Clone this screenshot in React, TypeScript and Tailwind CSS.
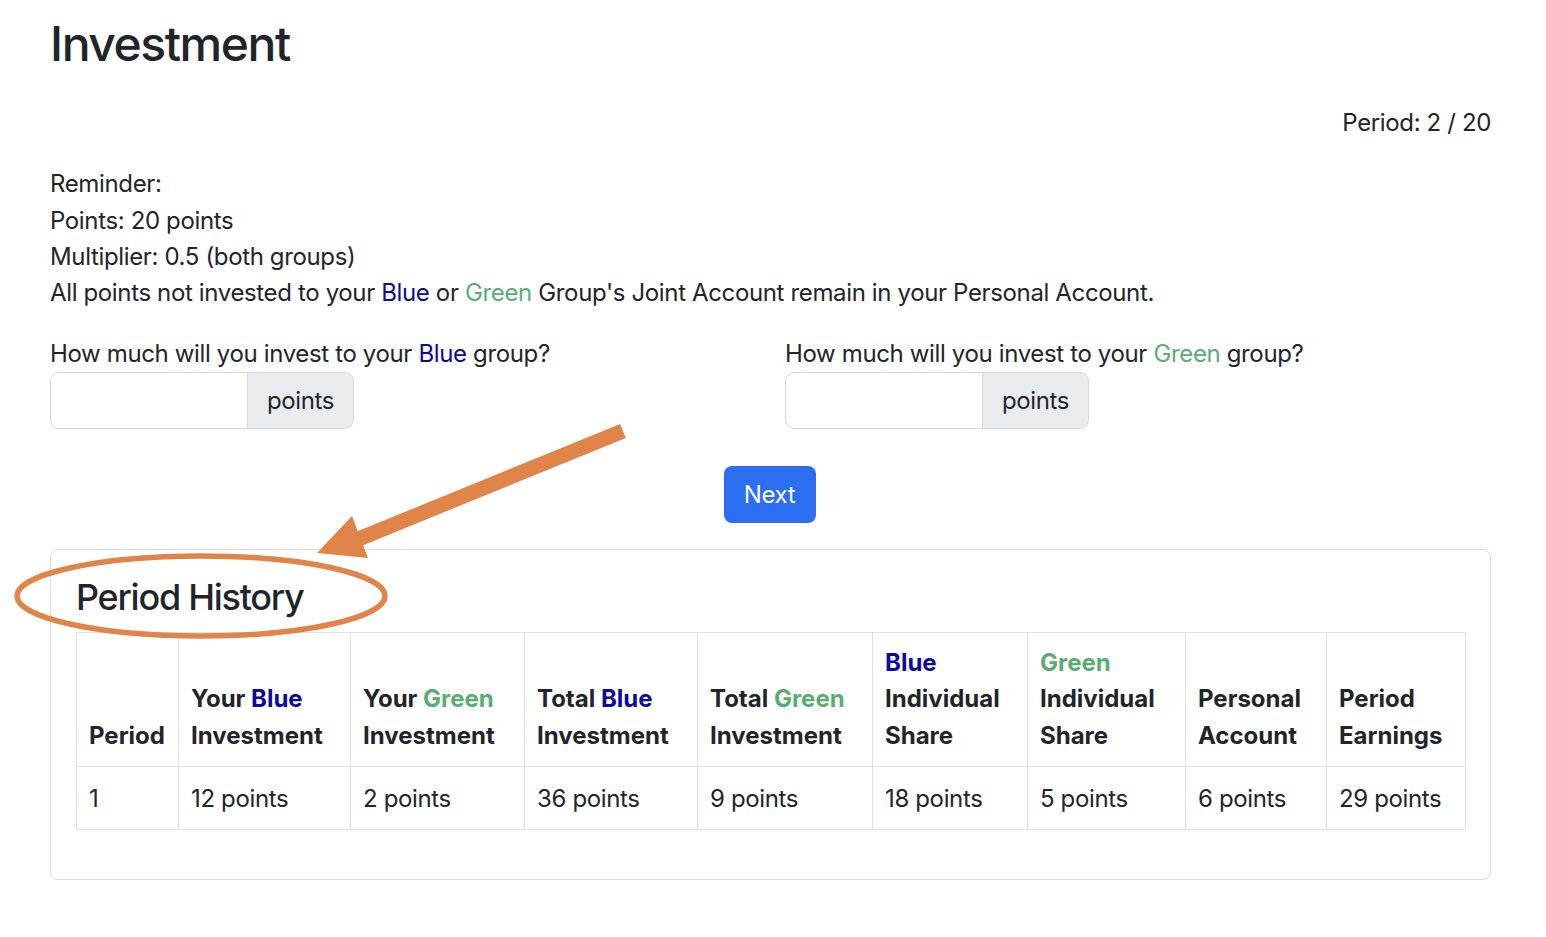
import React from "react";

const Blue = ({ children }: { children: React.ReactNode }) => (
  <span className="text-[#0a0a9c]">{children}</span>
);
const Green = ({ children }: { children: React.ReactNode }) => (
  <span className="text-[#5aad72]">{children}</span>
);

function InvestInput({ label }: { label: React.ReactNode }) {
  return (
    <div>
      <div>{label}</div>
      <div className="flex w-[304px]">
        <input
          type="text"
          className="h-[57px] w-[198px] rounded-l-[9px] border border-[#d6d9dc] bg-white px-[18px] outline-none"
        />
        <span className="flex h-[57px] w-[106px] items-center justify-center rounded-r-[9px] border border-l-0 border-[#d6d9dc] bg-[#e9ecef]">
          points
        </span>
      </div>
    </div>
  );
}

const headers: React.ReactNode[] = [
  "Period",
  <>
    Your <Blue>Blue</Blue> Investment
  </>,
  <>
    Your <Green>Green</Green> Investment
  </>,
  <>
    Total <Blue>Blue</Blue> Investment
  </>,
  <>
    Total <Green>Green</Green> Investment
  </>,
  <>
    <Blue>Blue</Blue> Individual Share
  </>,
  <>
    <Green>Green</Green> Individual Share
  </>,
  "Personal Account",
  "Period Earnings",
];

const widths = [102, 172, 174, 173, 175, 155, 158, 141, 139];

const row = [
  "1",
  "12 points",
  "2 points",
  "36 points",
  "9 points",
  "18 points",
  "5 points",
  "6 points",
  "29 points",
];

export default function App() {
  return (
    <div
      className="relative min-h-[937px] bg-white text-[24px] leading-[1.52] tracking-[-0.015em] text-[#212529]"
      style={{ fontFamily: "Inter, 'Noto Sans', sans-serif" }}
    >
      <div className="ml-[50px] w-[1441px] pt-[15px]">
        {/* Title */}
        <h2 className="text-[48px] font-medium leading-[1.2] tracking-[-0.03em]">
          Investment
        </h2>

        <div className="mt-[32px] text-right">Period: 2 / 20</div>

        {/* Reminder */}
        <div className="mt-[25px]">
          <div>Reminder:</div>
          <div>Points: 20 points</div>
          <div>Multiplier: 0.5 (both groups)</div>
          <div>
            All points not invested to your <Blue>Blue</Blue> or{" "}
            <Green>Green</Green> Group's Joint Account remain in your Personal
            Account.
          </div>
        </div>

        {/* Inputs */}
        <div className="mt-[24px] grid grid-cols-[735px_1fr]">
          <InvestInput
            label={
              <>
                How much will you invest to your <Blue>Blue</Blue> group?
              </>
            }
          />
          <InvestInput
            label={
              <>
                How much will you invest to your <Green>Green</Green> group?
              </>
            }
          />
        </div>

        <div className="mt-[37px] flex justify-center pr-[2px]">
          <button className="h-[57px] w-[92px] rounded-[8px] bg-[#2b6ef2] text-white">
            Next
          </button>
        </div>

        {/* Period History card */}
        <div className="mt-[26px] rounded-[8px] border border-[#dcdcdc] px-[25px] pt-[26px] pb-[25px]">
          <h4 className="text-[36px] font-medium leading-[1.2] tracking-[-0.035em]">
            Period History
          </h4>
          <table className="mt-[12px] mb-[24px] w-[1389px] table-fixed border-collapse">
            <colgroup>
              {widths.map((w, i) => (
                <col key={i} style={{ width: w }} />
              ))}
            </colgroup>
            <thead>
              <tr>
                {headers.map((h, i) => (
                  <th
                    key={i}
                    className="border border-[#dee2e6] px-[12px] py-[12px] text-left align-bottom font-bold tracking-normal"
                  >
                    {h}
                  </th>
                ))}
              </tr>
            </thead>
            <tbody>
              <tr>
                {row.map((c, i) => (
                  <td
                    key={i}
                    className="border border-[#dee2e6] px-[12px] pt-[14px] pb-[12px]"
                  >
                    {c}
                  </td>
                ))}
              </tr>
            </tbody>
          </table>
        </div>
      </div>

      {/* Orange annotation overlay */}
      <svg
        className="pointer-events-none absolute left-0 top-0"
        width="1546"
        height="937"
        viewBox="0 0 1546 937"
      >
        <line
          x1="623"
          y1="431"
          x2="356"
          y2="540"
          stroke="#e0844a"
          strokeWidth="15"
        />
        <polygon points="317,553 352,516 368,558" fill="#e0844a" />
        <ellipse
          cx="201"
          cy="596"
          rx="184"
          ry="40"
          fill="none"
          stroke="#e0844a"
          strokeWidth="5.5"
        />
      </svg>
    </div>
  );
}
